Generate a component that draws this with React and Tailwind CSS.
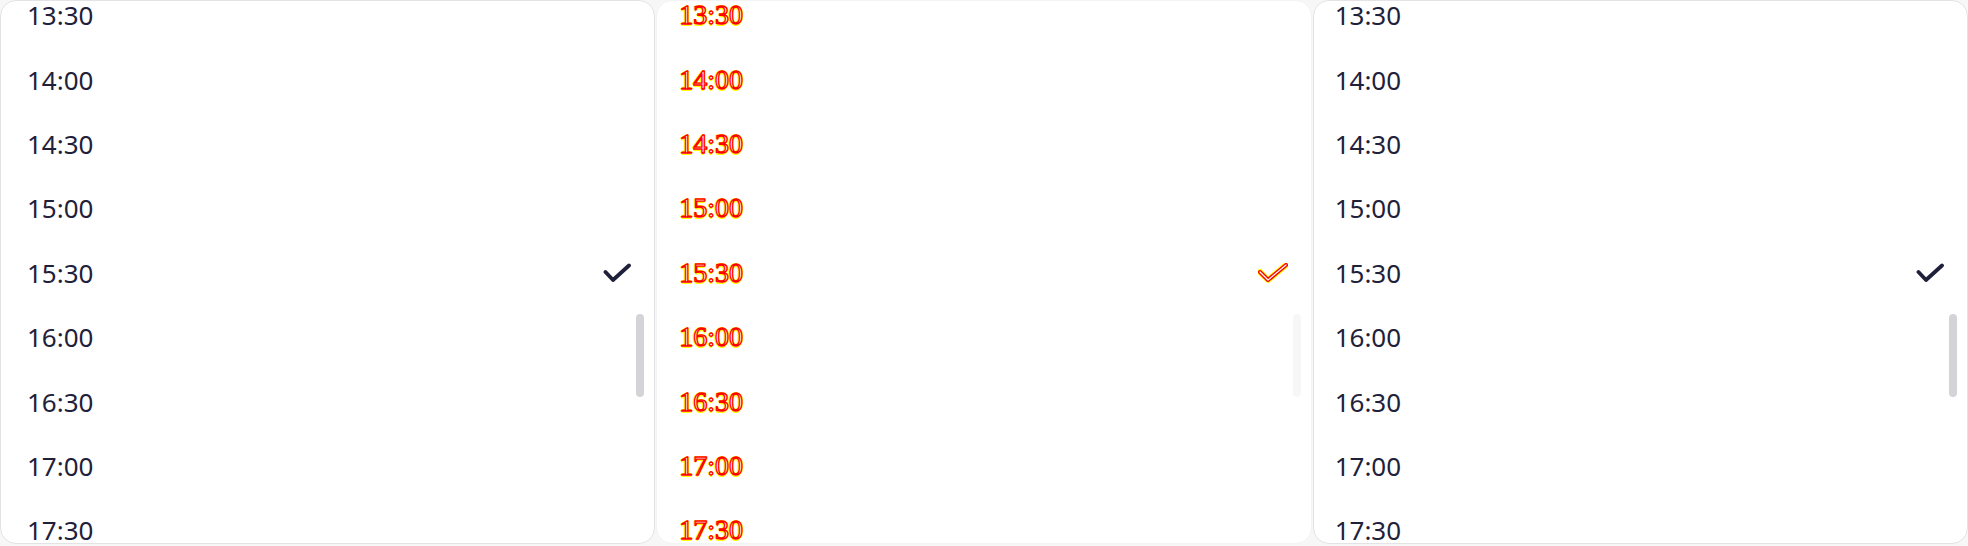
const times = ['13:30', '14:00', '14:30', '15:00', '15:30', '16:00', '16:30', '17:00', '17:30'];
const selected = '15:30';

function Check({ ghost }) {
  if (ghost) {
    return (
      <svg width="30" height="20" viewBox="0 0 30 20" fill="none" strokeLinecap="round" strokeLinejoin="round">
        <path d="M2 9 L10 17 L28 2" stroke="#ffff00" strokeWidth="6" />
        <path d="M2 9 L10 17 L28 2" stroke="#ff0000" strokeWidth="4" />
        <path d="M2 9 L10 17 L28 2" stroke="#ffffff" strokeWidth="1.2" />
      </svg>
    );
  }
  return (
    <svg width="28" height="20" viewBox="0 0 28 20" fill="none" strokeLinecap="round" strokeLinejoin="round">
      <path d="M2.5 9 L10 17 L26 2.5" stroke="#1e2139" strokeWidth="3.8" />
    </svg>
  );
}

function Panel({ ghost, padLeft }) {
  return (
    <div
      className={`relative flex-1 h-[544px] overflow-hidden rounded-2xl bg-white border ${
        ghost ? 'border-[#f3f3f3]' : 'border-[#e3e3e6]'
      }`}
    >
      <ul className="mt-[-18px]">
        {times.map((t) => (
          <li key={t} className={`flex h-[64.4px] items-center justify-between pr-[23px] ${padLeft}`}>
            {ghost ? (
              <span className="font-['Liberation_Serif',serif] text-[28px] leading-none text-[#fff6f0] [-webkit-text-stroke:1.3px_#ff0000] [text-shadow:1.5px_0_#ffff00,-1.5px_0_#ffff00,0_1.5px_#ffff00,0_-1.5px_#ffff00]">
                {t}
              </span>
            ) : (
              <span className="font-['Noto_Sans',sans-serif] text-[26px] leading-none text-[#1e2139]">{t}</span>
            )}
            {t === selected && <Check ghost={ghost} />}
          </li>
        ))}
      </ul>

      {/* scrollbar */}
      <div
        className={`absolute right-[10px] top-[313px] h-[83px] w-2 rounded-full ${
          ghost ? 'bg-[#f7f7f7]' : 'bg-[#d4d4d8]'
        }`}
      />
    </div>
  );
}

export default function App() {
  return (
    <div className="flex h-[546px] w-[1968px] gap-px bg-[#f7f7f7]">
      <Panel padLeft="pl-[26px]" />
      <Panel ghost padLeft="pl-[22px]" />
      <Panel padLeft="pl-[21px]" />
    </div>
  );
}
